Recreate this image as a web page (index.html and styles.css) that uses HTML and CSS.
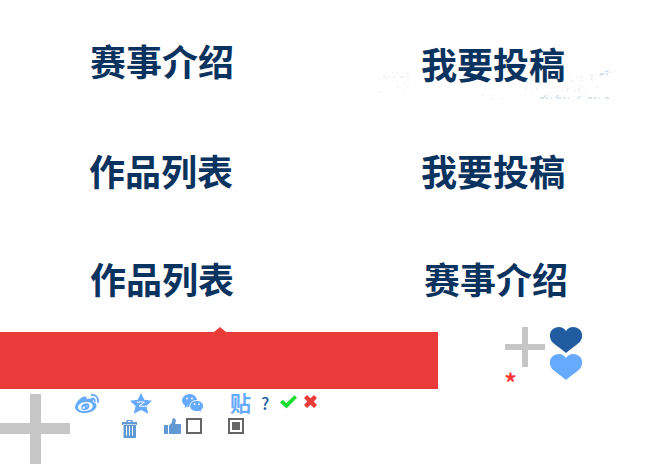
FILE: index.html
```html
<!DOCTYPE html>
<html lang="zh-CN">
<head>
<meta charset="utf-8">
<title>赛事介绍</title>
<link rel="stylesheet" href="styles.css">
</head>
<body>
<main class="sheet">
  <section class="titles">
    <svg class="specks" width="245" height="36" viewBox="0 0 245 36" fill="none">
      <path stroke="#f5f6f9" stroke-width="2" stroke-dasharray="2 5 1 3" d="M10 6h28M4 12h10M22 20h6M4 25h5M29 15v10M33 8v16M107 28h12M116 32h20M164 15h12M150 22h19M194 10h43M199 24h13"/>
      <path stroke="#dfe4ed" stroke-dasharray="3 2 1 4 2 5" d="M8 10h28M164 18l9-4M192 24l6-13M204 24l4-14M216 11l8 12M224 8l17-4M215 8h18"/>
      <path stroke="#b9c9e3" stroke-dasharray="4 2 2 3 1 5" d="M165 31h32M171 28l-4 5M183 28l-4 5M205 29l-4 5M213 31h22M225 7h10M230 5l5-2"/>
    </svg>
    <h2 class="title intro">赛事介绍</h2>
    <h2 class="title submit low">我要投稿</h2>
    <h2 class="title">作品列表</h2>
    <h2 class="title submit">我要投稿</h2>
    <h2 class="title list">作品列表</h2>
    <h2 class="title last">赛事介绍</h2>
  </section>
  <section class="middle">
    <div class="banner"><i class="notch"></i><div class="band"></div></div>
    <div class="add">
      <svg width="40" height="40" viewBox="0 0 40 40"><path fill="#c6c6c6" d="M17 0h6v17h17v6H23v17h-6V23H0v-6h17z"/></svg>
      <span class="required">*</span>
    </div>
    <div class="hearts">
      <svg width="32" height="26" viewBox="0 0 32 26" fill="#205c9f"><path d="M16 4C19-1 25-.8 29 2c4 3 4 9 .8 13C26 19 20 22 16 26 12 22 6 19 2.200 15-1 11-1 5 3 2c4-2.800 10-3 13 2z"/></svg>
      <svg width="32" height="26" viewBox="0 0 32 26" fill="#65aaff"><path d="M16 4C19-1 25-.8 29 2c4 3 4 9 .8 13C26 19 20 22 16 26 12 22 6 19 2.200 15-1 11-1 5 3 2c4-2.800 10-3 13 2z"/></svg>
    </div>
  </section>
  <section class="bottom">
    <svg width="70" height="70" viewBox="0 0 70 70"><path fill="#c6c6c6" d="M30 0h11v29h29v11H41v30H30V40H0V29h30z"/></svg>
    <div class="tools">
      <div class="share">
        <svg class="weibo" width="24" height="20" viewBox="0 0 24 20">
          <path fill="#65aaff" fill-rule="evenodd" d="M1 11C3 7 7 2.800 10.500 3.500c1.500.5 1.300 1.800 1 2.800 3.200-1.200 6.700-1.200 6.700.8 0 .8-.4 1.300-.4 1.800 2.200.6 3.700 1.600 3.700 3.700 0 4.200-5.300 7.400-11 7.400C4.500 20 0 17.700 0 14.200 0 13 .4 12 1 11zm9.800-1.900C6.600 9.300 3 11.500 3 14.300s3 4 7.500 3.700c4.300-.3 7.500-2.500 7.300-5.200-.2-2.600-2.900-3.900-7-3.700zM10.300 10.400c3-.4 4.900 1.400 3.900 3.800-1 2.500-4.500 3.700-6.800 2.500-2.700-1.600-1.100-5.800 2.900-6.300zm-1.600 3c-1 .2-1.600 1.100-1.200 1.900.4.700 1.500.7 2.200.1.700-.7.100-2.100-1-2zm3-.8c-.5.200-.6.800-.2 1 .5.200 1-.1 1-.5s-.4-.6-.8-.5z"/>
          <path fill="none" stroke="#65aaff" stroke-width="1.800" d="M16 2c5-.9 8 3 6.700 7.700M16.500 5.500c2.500-.2 3.700 1.500 3.100 3.600"/>
        </svg>
        <svg class="qzone" width="22" height="21" viewBox="0 0 22 21">
          <path fill="#65aaff" d="M11 0l3.300 6.700 7.700 1-5.600 5.300 1.900 7.700L11 17l-7.300 3.700L5.600 13 0 7.700l7.700-1z"/>
          <path fill="none" stroke="#fff" stroke-width="1" d="M7 9.200q4-.7 7.500 0L9 13q3.500.8 7.500 0"/>
        </svg>
        <svg class="wechat" width="22" height="19" viewBox="0 0 22 19">
          <path fill="#65aaff" d="M7.500 0C12 0 15 3 15 6.500S12 13 7.500 13q-1 0-2.300-.4L2.500 14l.7-2.500C1 10.200 0 8.500 0 6.500 0 3 3.500 0 7.500 0z"/>
          <path fill="#65aaff" stroke="#fff" stroke-width=".9" d="M14.700 6.500c4 0 6.800 2.500 6.800 5.500 0 1.800-.9 3.300-2.500 4.300l.5 2.200-2.500-1.300c-5 1.200-9.200-1.400-9.200-5.200 0-3 3-5.500 6.900-5.500z"/>
          <g fill="#fff"><circle cx="5" cy="4.500" r="1"/><circle cx="10" cy="4.500" r="1"/><circle cx="12.500" cy="10.200" r=".9"/><circle cx="17" cy="10.200" r=".9"/></g>
        </svg>
        <span class="tieba">贴</span>
        <span class="help">?</span>
        <svg class="check" width="17" height="14" viewBox="0 0 17 14"><path fill="#19df31" d="M0 7.500L2.700 4.800 6.300 8 14.500.3 17 2.800 6.500 13.500z"/></svg>
        <svg class="cross" width="13" height="13" viewBox="0 0 13 13"><path fill="#e93b39" d="M3 0l3.500 3.300L10 0l3 3-3.300 3.500L13 10l-3 3-3.500-3.300L3 13l-3-3 3.300-3.500L0 3z"/></svg>
      </div>
      <div class="actions">
        <svg class="trash" width="15" height="18" viewBox="0 0 15 18">
          <path fill="#6199d5" fill-rule="evenodd" d="M4.500 0h6v2H15v3h-1v13H1.500V5H0V2h4.500zM6 1v1h3V1z"/>
          <path fill="none" stroke="#fff" d="M4.500 6v9.500M7.500 6v9.500M10.500 6v9.500"/>
          <path fill="none" stroke="#d5e4f5" stroke-width=".8" d="M1 4.500h13"/>
        </svg>
        <svg class="thumb" width="17" height="16" viewBox="0 0 17 16"><path fill="#6199d5" d="M0 7h4v9H0zM5 7c3-1 3.500-3.500 3.500-6.500 2-1 3.500.5 3.300 2.500L11.200 6H16q1 0 1 1v8q0 1-1 1H5z"/></svg>
        <i class="box"></i>
        <i class="box checked"></i>
      </div>
    </div>
  </section>
</main>
</body>
</html>
```
FILE: styles.css
```css
* { box-sizing: border-box; }
body { margin: 0; background: #fff; font-family: "Noto Sans CJK SC", sans-serif; }
svg { display: block; flex: none; }
.sheet { width: 663px; height: 464px; overflow: hidden; }
.titles {
  position: relative;
  height: 327px;
  padding: 34px 0 0 89px;
  display: grid;
  grid-template-columns: 332px 1fr;
  grid-template-rows: 110px 108px 108px;
  align-items: start;
}
.title { position: relative; margin: 0; font-size: 36px; line-height: 53px; font-weight: 700; color: #0b3360; white-space: nowrap; }
.intro, .list { padding-left: 1px; }
.low { padding-top: 3px; }
.last { padding-left: 3px; }
.specks { position: absolute; left: 375px; top: 67px; }
.middle { display: flex; height: 67px; }
.banner { width: 438px; }
.notch { display: block; width: 12px; height: 5px; margin-left: 214px; background: #e93b39; clip-path: polygon(50% 0, 100% 100%, 0 100%); }
.band { height: 57px; background: #e93b39; }
.add { margin-left: 67px; width: 45px; }
.required { display: block; font: 500 27px/27px "Noto Sans CJK SC", sans-serif; color: #ff3030; margin-top: 2px; margin-left: -1px; }
.hearts { display: flex; flex-direction: column; gap: 1px; }
.bottom { display: flex; height: 70px; }
.share { display: flex; align-items: flex-start; height: 24px; }
.weibo { margin-left: 5px; margin-top: -1px; }
.qzone { margin-left: 31px; margin-top: -1px; }
.wechat { margin-left: 30px; }
.tieba { margin-left: 26px; width: 22px; font-size: 21px; line-height: 16px; color: #65aaff; font-weight: 700; }
.help { width: 19px; margin-left: 9px; font: 500 17px/18px "Noto Sans CJK SC", sans-serif; color: #205c9f; }
.check { margin-top: 1px; }
.cross { margin-left: 7px; margin-top: 1px; }
.actions { display: flex; align-items: flex-start; }
.trash { margin: 2px 0 0 52px; }
.thumb { margin-left: 27px; }
.box { width: 16px; height: 16px; margin-left: 5px; border: 2px solid #666; }
.checked { margin-left: 26px; padding: 2px; background: #666 content-box; }
```
